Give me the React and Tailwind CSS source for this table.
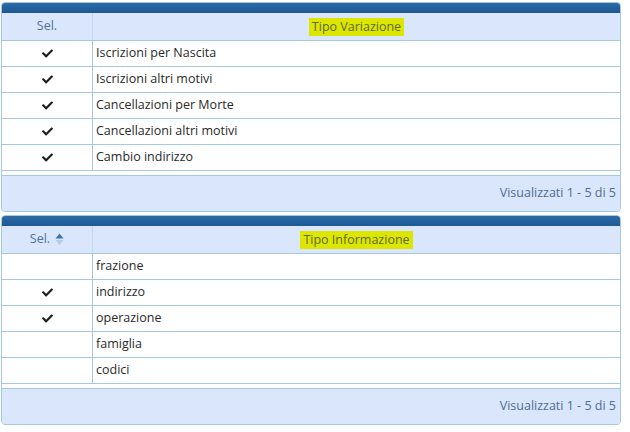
import { FaCheck } from 'react-icons/fa'

const variazioni = [
  { label: 'Iscrizioni per Nascita', sel: true },
  { label: 'Iscrizioni altri motivi', sel: true },
  { label: 'Cancellazioni per Morte', sel: true },
  { label: 'Cancellazioni altri motivi', sel: true },
  { label: 'Cambio indirizzo', sel: true }
]

const informazioni = [
  { label: 'frazione', sel: false },
  { label: 'indirizzo', sel: true },
  { label: 'operazione', sel: true },
  { label: 'famiglia', sel: false },
  { label: 'codici', sel: false }
]

const SortIcon = () => (
  <svg width="9" height="13" viewBox="0 0 9 13" className="ml-[5px]">
    <path d="M4.5 0.5 L8.5 5.5 L0.5 5.5 Z" fill="#3d74a8" />
    <path d="M0.5 7 L8.5 7 L4.5 12 Z" fill="#b3cbe3" />
  </svg>
)

const Grid = ({ title, rows, sortable }) => (
  <div className="w-[620px] border border-[#a6c9e2] rounded-[4px] overflow-hidden bg-white">
    {/* caption bar */}
    <div className="h-[10px] bg-gradient-to-b from-[#2c6aa6] to-[#1d5993]"></div>

    {/* header */}
    <div className="flex h-[28px] bg-[#d9e6fc] border-b border-[#a6c9e2] text-[12.5px]">
      <div className="w-[91px] flex items-center justify-center border-r border-[#c3d7ee] text-[#52719a]">
        <span>Sel.</span>
        {sortable && <SortIcon />}
      </div>
      <div className="flex-1 flex items-center justify-center">
        <span className="bg-[#dde600] text-[#5e6a26] px-[3px] leading-[18px]">{title}</span>
      </div>
    </div>

    {/* rows */}
    {rows.map((row) => (
      <div key={row.label} className="flex h-[26px] border-b border-[#a6c9e2] text-[12.5px] text-[#2a2a2a]">
        <div className="w-[91px] flex items-center justify-center border-r border-[#a6c9e2]">
          {row.sel && <FaCheck className="text-[#1e1e1e] w-[11px] h-[11px]" />}
        </div>
        <div className="flex-1 flex items-center pl-[3px]">{row.label}</div>
      </div>
    ))}

    {/* pager */}
    <div className="mt-[4px] h-[36px] bg-[#d9e6fc] border-t border-[#a6c9e2] flex items-center justify-end pr-[4px] text-[12.5px] text-[#4f6d91]">
      Visualizzati 1 - 5 di 5
    </div>
  </div>
)

export default function App() {
  return (
    <div className="w-[630px] h-[432px] bg-white pl-[1px] pt-[2px] flex flex-col gap-[3px]" style={{ fontFamily: '"Open Sans", sans-serif' }}>
      <Grid title="Tipo Variazione" rows={variazioni} />
      <Grid title="Tipo Informazione" rows={informazioni} sortable />
    </div>
  )
}
